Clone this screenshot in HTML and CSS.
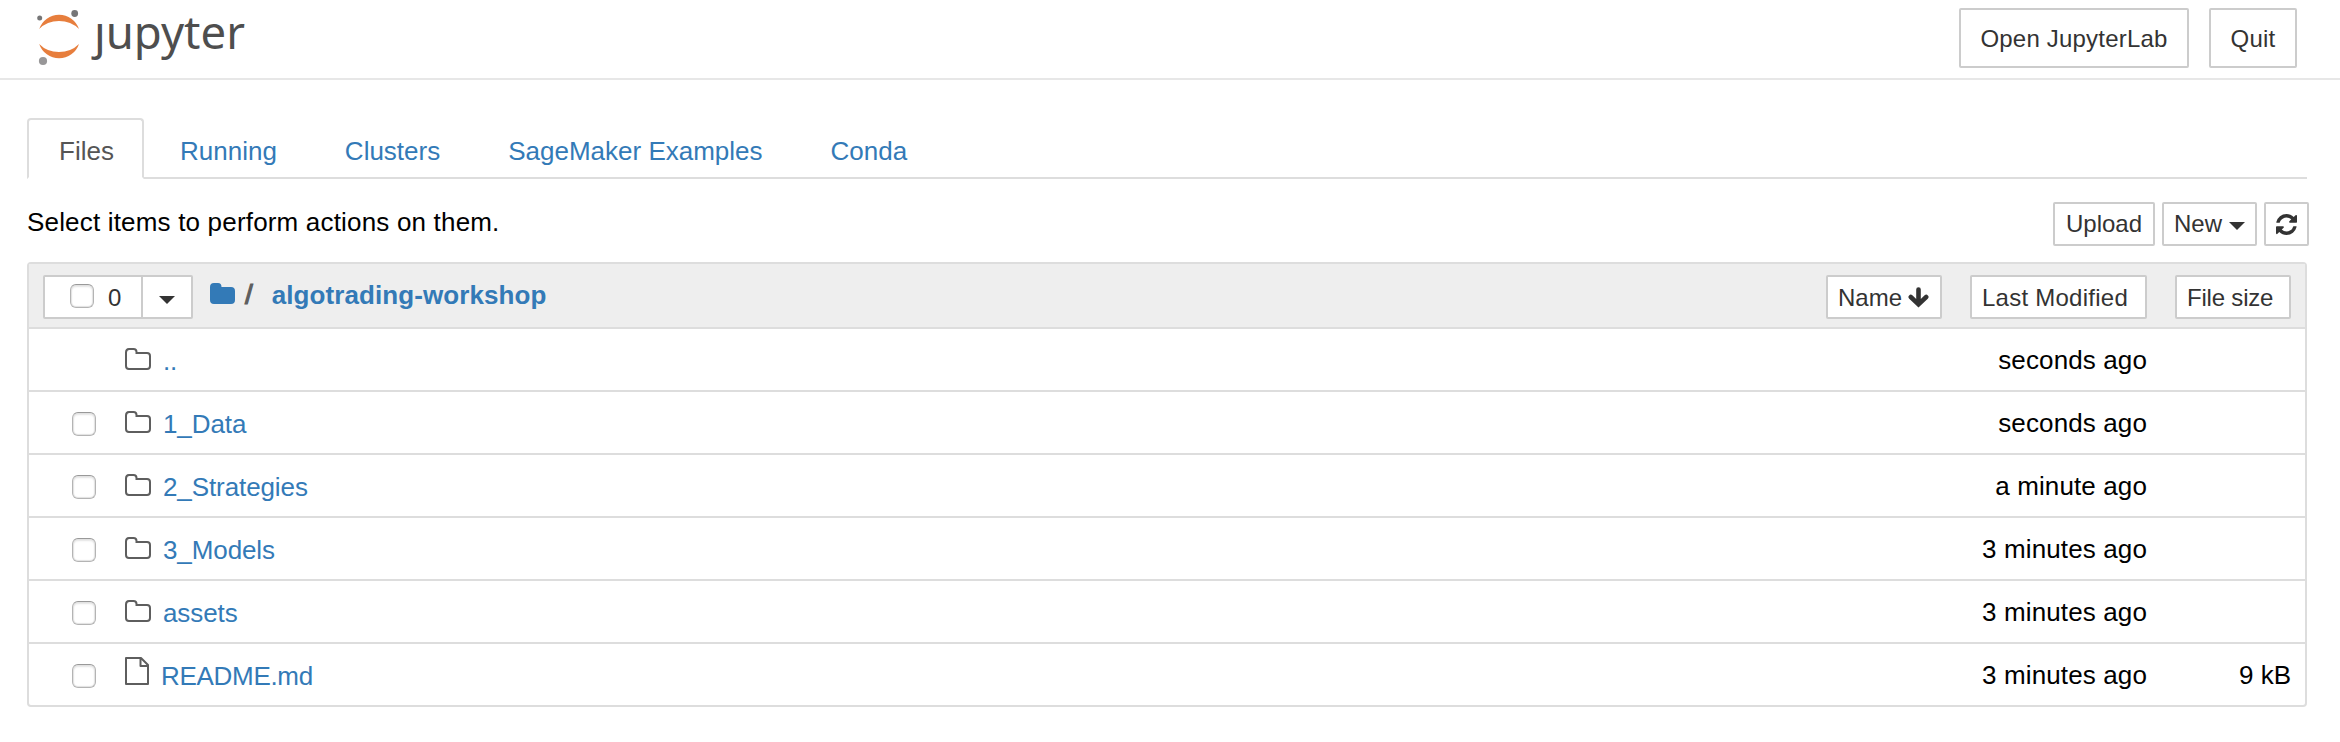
FILE: index.html
```
<!DOCTYPE html>
<html lang="en">
<head>
<meta charset="utf-8">
<title>Home Page - Jupyter Notebook</title>
<link rel="stylesheet" href="styles.css">
</head>
<body>
<svg class="defs" width="0" height="0">
  <symbol id="folder-o" viewBox="0 0 26 22"><path d="M1 4.500Q1 1 4 1H8.500Q11.500 1 11.500 4V5H22Q25 5 25 8V18Q25 21 22 21H4Q1 21 1 18Z" fill="none" stroke="#5e5e5e" stroke-width="2"/></symbol>
  <symbol id="file-o" viewBox="0 0 24 28"><path d="M1 1H16L23 8V27H1ZM15.500 1V9H23" fill="none" stroke="#5e5e5e" stroke-width="2" stroke-linejoin="round"/></symbol>
</svg>
<header class="header">
  <svg class="logo" width="214" height="70" viewBox="0 0 214 70">
    <path d="M3.200 29A21 21 0 0 1 43 29Q35 21 23 21T3.200 29Z" fill="#e77e3d"/>
    <path d="M3.200 44A21 21 0 0 0 43 44Q35 52 23 52T3.200 44Z" fill="#e77e3d"/>
    <circle cx="38.700" cy="13.500" r="3.400" fill="#767677"/>
    <circle cx="3.700" cy="18" r="2.500" fill="#767677"/>
    <circle cx="7" cy="61" r="4.100" fill="#989798"/>
    <text class="wordmark" x="58" y="49" textLength="151" lengthAdjust="spacingAndGlyphs">ȷupyter</text>
  </svg>
  <div class="actions">
    <button class="btn large open">Open JupyterLab</button>
    <button class="btn large quit">Quit</button>
  </div>
</header>
<main class="main">
  <nav class="tabs">
    <a class="tab active">Files</a><a class="tab">Running</a><a class="tab">Clusters</a><a class="tab">SageMaker Examples</a><a class="tab">Conda</a>
  </nav>
  <div class="toolbar">
    <span class="hint">Select items to perform actions on them.</span>
    <div class="tools">
      <button class="btn upload">Upload</button>
      <button class="btn new">New<i class="caret"></i></button>
      <button class="btn refresh"><svg width="21" height="21" viewBox="0 0 1536 1536"><path fill="#333" d="M1511 928q0 5-1 7-64 268-268 434.500T764 1536q-146 0-282.500-55T238 1324l-129 129q-19 19-45 19t-45-19-19-45V960q0-26 19-45t45-19h448q26 0 45 19t19 45-19 45l-137 137q71 66 161 102t187 36q134 0 250-65t186-179q11-17 53-117 8-23 30-23h192q13 0 22.500 9.500t9.500 22.500zm25-800v448q0 26-19 45t-45 19h-448q-26 0-45-19t-19-45 19-45l138-138Q969 256 768 256q-134 0-250 65T332 500q-11 17-53 117-8 23-30 23H50q-13 0-22.500-9.500T18 608v-7q65-268 270-434.500T768 0q146 0 284 55.500T1297 212l130-129q19-19 45-19t45 19 19 45z"/></svg></button>
    </div>
  </div>
  <section class="list">
    <div class="list-head">
      <div class="select"><span class="select-all"><i class="check"></i>0</span><span class="select-menu"><i class="caret"></i></span></div>
      <svg class="home" width="25" height="22" viewBox="0 0 25 22"><path d="M0 4Q0 0 4 0H8Q11.500 0 11.500 4H21Q25 4 25 8V17Q25 21 21 21H4Q0 21 0 17Z" fill="#337ab7"/></svg>
      <span class="slash">/</span>
      <a class="crumb">algotrading-workshop</a>
      <div class="sorts">
        <button class="btn sort">Name<svg class="arrow" width="21" height="22" viewBox="0 0 21 22"><path d="M10.500 2.500V16M2.800 10L10.500 17.300L18.200 10" fill="none" stroke="#333" stroke-width="4.600" stroke-linecap="round"/></svg></button>
        <button class="btn sort modified">Last Modified</button>
        <button class="btn sort filesize">File size</button>
      </div>
    </div>
    <div class="row"><i class="check hidden"></i><svg class="icon" width="26" height="22"><use href="#folder-o"/></svg><a class="name">..</a><span class="time">seconds ago</span><span class="size"></span></div>
    <div class="row"><i class="check"></i><svg class="icon" width="26" height="22"><use href="#folder-o"/></svg><a class="name">1_Data</a><span class="time">seconds ago</span><span class="size"></span></div>
    <div class="row"><i class="check"></i><svg class="icon" width="26" height="22"><use href="#folder-o"/></svg><a class="name">2_Strategies</a><span class="time">a minute ago</span><span class="size"></span></div>
    <div class="row"><i class="check"></i><svg class="icon" width="26" height="22"><use href="#folder-o"/></svg><a class="name">3_Models</a><span class="time">3 minutes ago</span><span class="size"></span></div>
    <div class="row"><i class="check"></i><svg class="icon" width="26" height="22"><use href="#folder-o"/></svg><a class="name">assets</a><span class="time">3 minutes ago</span><span class="size"></span></div>
    <div class="row"><i class="check"></i><svg class="icon file" width="24" height="28"><use href="#file-o"/></svg><a class="name readme">README.md</a><span class="time">3 minutes ago</span><span class="size">9 kB</span></div>
  </section>
</main>
</body>
</html>
```
FILE: styles.css
```
* { box-sizing: border-box; }
body { margin: 0; background: #fff; color: #000; font: 26px/36px "Liberation Sans", Arial, sans-serif; }
.defs { display: block; }
.header { height: 80px; border-bottom: 2px solid #e7e7e7; display: flex; justify-content: space-between; padding: 0 43px 0 36px; }
.logo { display: block; }
.wordmark { font: 45px "Noto Sans", sans-serif; fill: #4e4e4e; }
.actions { display: flex; gap: 20px; padding-top: 8px; }
.btn { display: flex; align-items: center; height: 44px; margin: 0; padding: 1px 10px 0; border: 2px solid #ccc; border-radius: 2px; background: #fff; color: #333; font: 24px/36px "Liberation Sans", Arial, sans-serif; white-space: nowrap; }
.btn.large { height: 60px; padding: 1px 0 0; justify-content: center; letter-spacing: 0.2px; }
.open { width: 230px; }
.quit { width: 88px; }
.main { padding: 38px 33px 0 27px; }
.tabs { display: flex; gap: 4px; height: 61px; border-bottom: 2px solid #ddd; }
.tab { height: 61px; padding: 13px 30px 0; border: 2px solid transparent; color: #337ab7; }
.tab.active { width: 117px; background: #fff; border-color: #ddd; border-bottom-color: #fff; border-radius: 4px 4px 0 0; color: #555; }
.toolbar { display: flex; justify-content: space-between; height: 83px; padding-top: 23px; margin-right: -2px; }
.hint { padding-top: 2px; letter-spacing: 0.18px; }
.tools { display: flex; gap: 7px; }
.tools .btn { padding-top: 0; }
.upload { width: 102px; justify-content: center; }
.new { width: 95px; }
.refresh { width: 45px; }
.caret { border: 8px solid transparent; border-top-color: #333; border-bottom: 0; margin-left: 7px; }
.new .caret { margin-top: 4px; }
.list { border: 2px solid #ddd; border-radius: 4px; }
.list-head { display: flex; height: 63px; background: #eee; padding: 11px 14px 0; }
.select { display: flex; width: 150px; height: 44px; border: 2px solid #ccc; border-radius: 2px; background: #fff; color: #333; font-size: 24px; }
.select-all { display: flex; width: 98px; padding: 7px 0 0 25px; gap: 14px; border-right: 2px solid #ccc; line-height: 28px; }
.select-menu { padding: 19px 0 0 9px; display: flex; }
.check { flex: none; display: block; width: 24px; height: 24px; border: 1px solid #b4b4b4; border-top-color: #999; border-radius: 6px; background: #fff; box-shadow: inset 0 0 1px 1px #e2e2e2, inset 0 2px 2px #e6e6e6; }
.home { margin: 8px 0 0 17px; }
.slash { margin: 2px 0 0 10px; font-size: 28px; color: #5e5e5e; -webkit-text-stroke: 1.2px #5e5e5e; }
.crumb { margin: 2px 0 0 19px; font-weight: 700; color: #337ab7; letter-spacing: 0.08px; }
.sorts { display: flex; gap: 28px; margin-left: auto; }
.sort { width: 116px; }
.modified { width: 177px; letter-spacing: 0.25px; }
.filesize { letter-spacing: -0.2px; }
.arrow { margin-left: 6px; }
.row { display: flex; height: 63px; border-top: 2px solid #ddd; padding: 0 14px 0 43px; line-height: 62px; }
.row .check { margin-top: 20px; }
.hidden { visibility: hidden; }
.icon { flex: none; margin: 19px 12px 0 29px; }
.file { margin: 13px 12px 0 29px; }
.name { padding-top: 1px; color: #337ab7; letter-spacing: -0.1px; }
.readme { letter-spacing: -0.3px; }
.time { margin-left: auto; letter-spacing: 0.12px; }
.size { width: 144px; text-align: right; }
```
